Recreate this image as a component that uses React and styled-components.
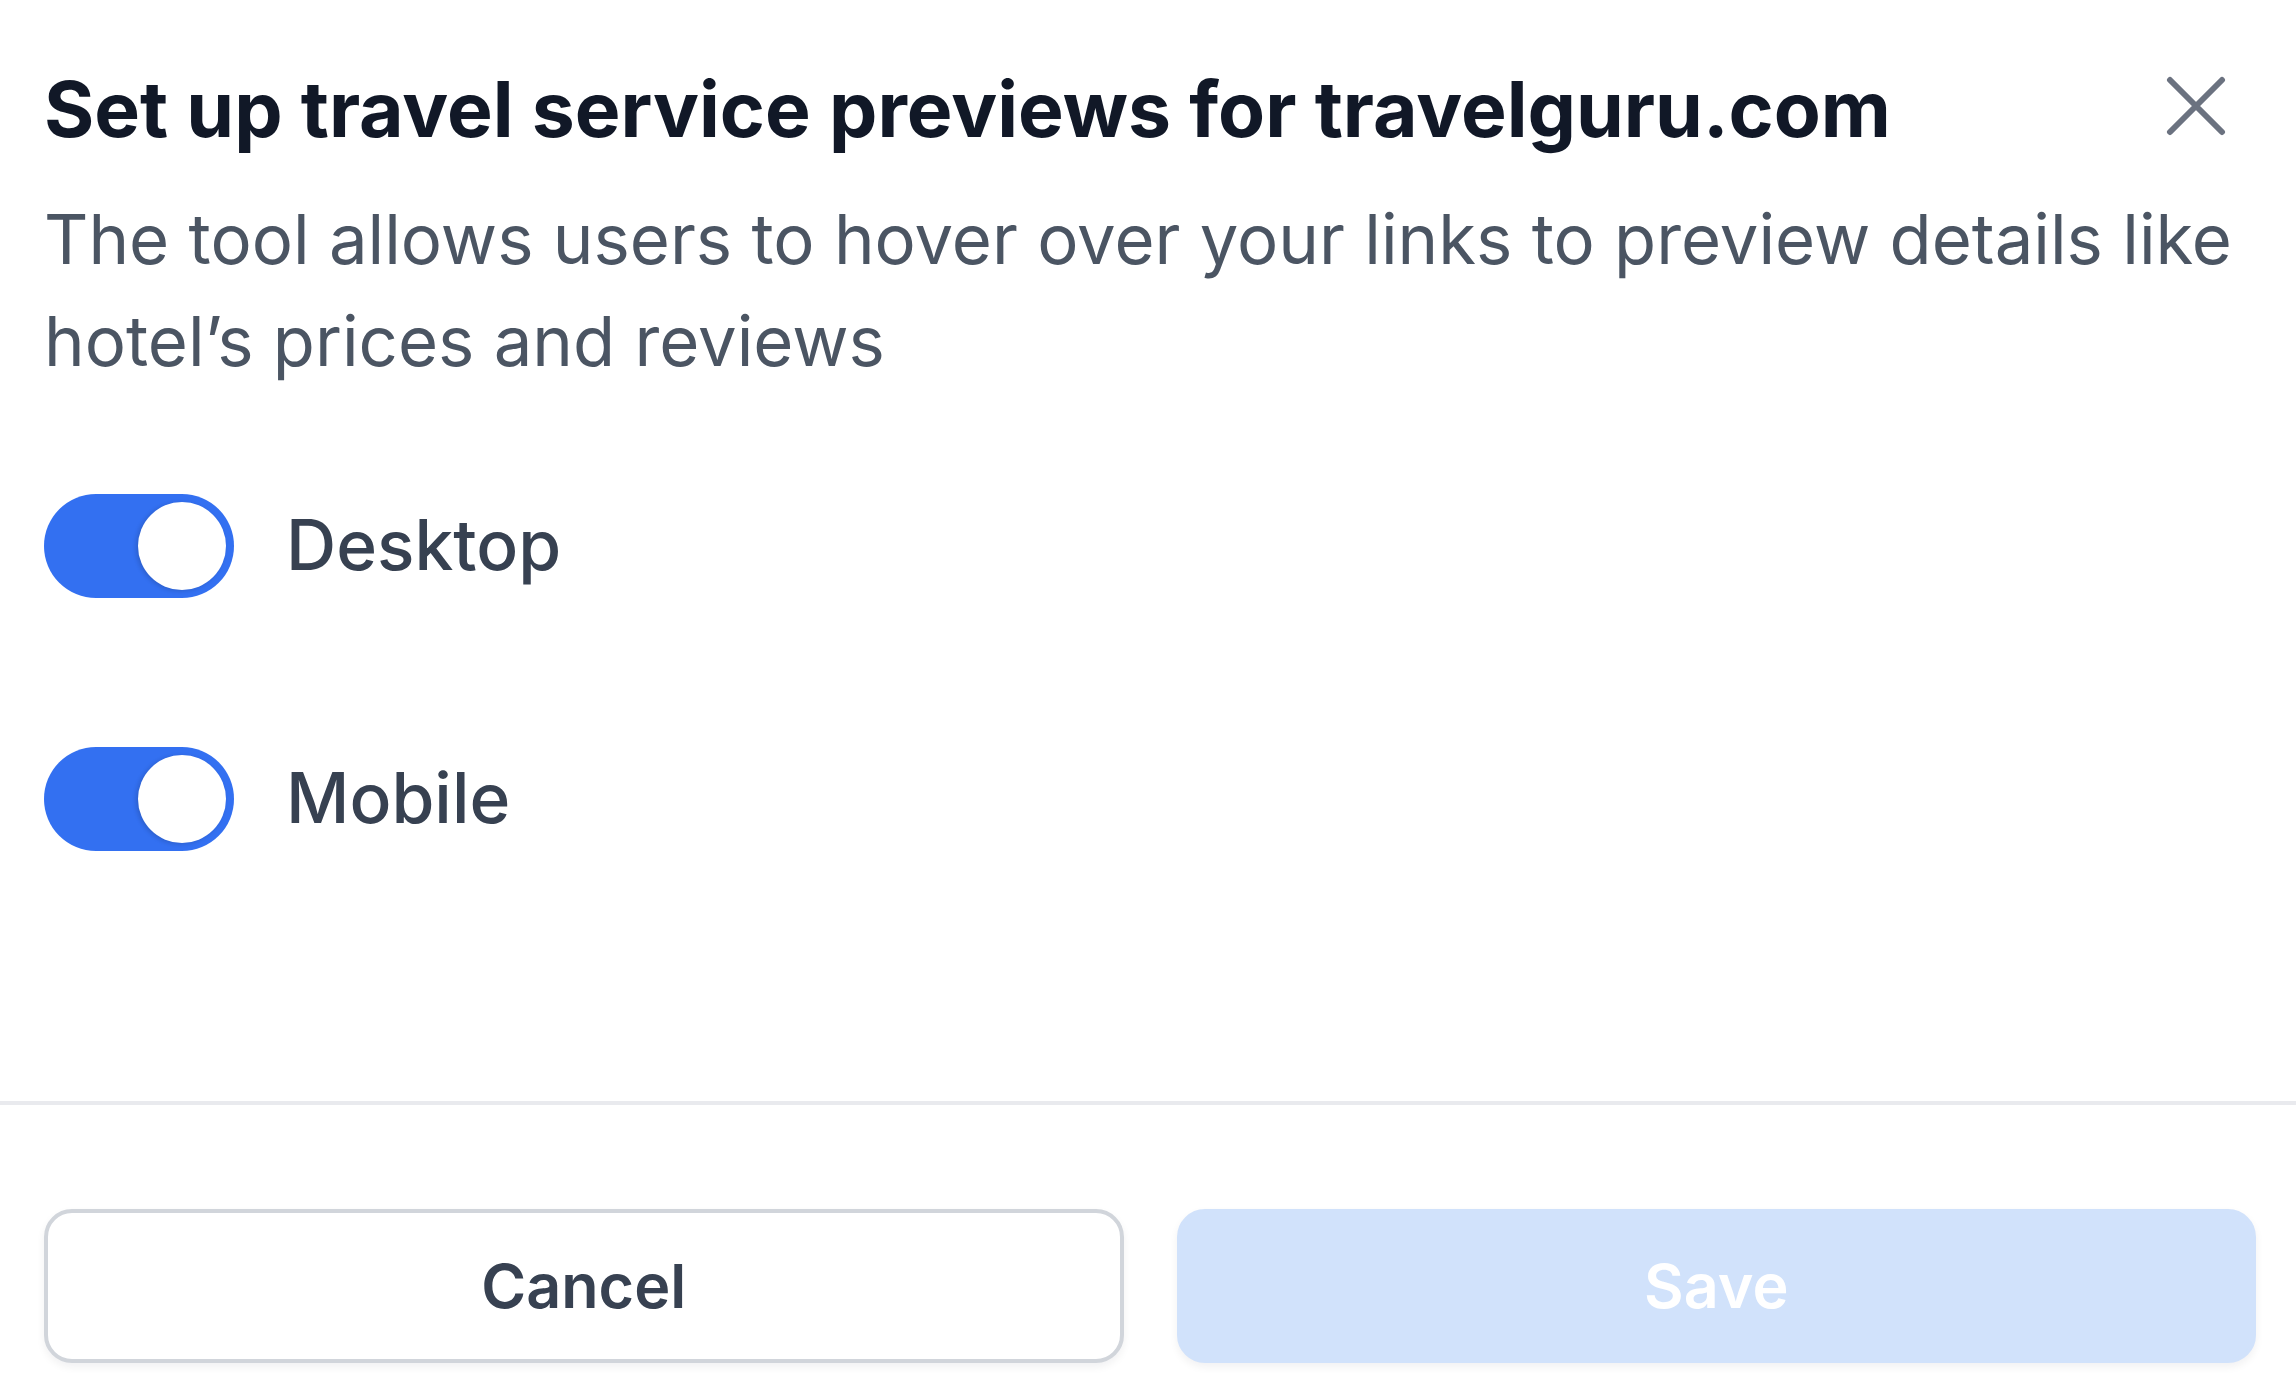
import React, { useState } from 'react'
import styled, { createGlobalStyle } from 'styled-components'

const GlobalStyle = createGlobalStyle`
  html, body {
    margin: 0;
    padding: 0;
    background: #ffffff;
  }
  body {
    font-family: Inter, "Noto Sans", "Liberation Sans", sans-serif;
    -webkit-font-smoothing: antialiased;
  }
  * {
    box-sizing: border-box;
  }
`

const Modal = styled.section`
  width: 100%;
  min-height: 100vh;
  background: #ffffff;
  display: flex;
  flex-direction: column;
`

const Body = styled.div`
  padding: 60px 40px 0 44px;
`

const Header = styled.div`
  display: flex;
  justify-content: space-between;
  align-items: flex-start;
`

const Title = styled.h2`
  margin: 0;
  font-size: 76.8px;
  line-height: 99px;
  font-weight: 700;
  color: #111827;
`

const CloseButton = styled.button`
  margin: 16px 30px 0 0;
  padding: 0;
  width: 60px;
  height: 60px;
  border: none;
  background: none;
  color: #6b7280;
  cursor: pointer;
  display: flex;

  svg {
    width: 100%;
    height: 100%;
  }
`

const Description = styled.p`
  margin: 29px 0 0;
  font-size: 68.8px;
  line-height: 102px;
  font-weight: 400;
  color: #4b5563;
`

const ToggleList = styled.div`
  display: flex;
  flex-direction: column;
  gap: 149px;
  margin-top: 102px;
  padding-bottom: 250px;
`

const ToggleRow = styled.label`
  display: flex;
  align-items: center;
  gap: 52px;
  cursor: pointer;
`

const Track = styled.span`
  width: 190px;
  height: 104px;
  border-radius: 52px;
  padding: 8px;
  display: flex;
  justify-content: ${({ $on }) => ($on ? 'flex-end' : 'flex-start')};
  align-items: center;
  background: ${({ $on }) => ($on ? '#3370f1' : '#e5e7eb')};
  flex-shrink: 0;
`

const Knob = styled.span`
  width: 88px;
  height: 88px;
  border-radius: 50%;
  background: #ffffff;
  box-shadow: -2px 1px 4px rgba(17, 24, 39, 0.18);
`

const ToggleLabel = styled.span`
  font-size: 69.5px;
  line-height: 1;
  font-weight: 500;
  color: #374151;
`

const Divider = styled.hr`
  margin: 0;
  border: none;
  height: 4px;
  background: #e9eaee;
`

const Footer = styled.div`
  display: grid;
  grid-template-columns: 1fr 1fr;
  gap: 53px;
  padding: 104px 40px 31px 44px;
`

const Button = styled.button`
  height: 154px;
  border-radius: 28px;
  font-family: inherit;
  font-size: 61px;
  font-weight: 600;
  cursor: ${({ $primary }) => ($primary ? 'not-allowed' : 'pointer')};
  border: 4px solid ${({ $primary }) => ($primary ? '#d1e2fb' : '#d1d5db')};
  background: ${({ $primary }) => ($primary ? '#d1e2fb' : '#ffffff')};
  color: ${({ $primary }) => ($primary ? '#ffffff' : '#374151')};
  box-shadow: 0 4px 8px rgba(17, 24, 39, 0.06);
`

function Toggle({ label, on, onChange }) {
  return (
    <ToggleRow onClick={onChange}>
      <Track $on={on}>
        <Knob />
      </Track>
      <ToggleLabel>{label}</ToggleLabel>
    </ToggleRow>
  )
}

export default function App() {
  const [desktop, setDesktop] = useState(true)
  const [mobile, setMobile] = useState(true)

  return (
    <>
      <GlobalStyle />
      <Modal>
        <Body>
          <Header>
            <Title>Set up travel service previews for travelguru.com</Title>
            <CloseButton aria-label="Close">
              <svg viewBox="0 0 60 60" fill="none" stroke="currentColor" strokeWidth="6" strokeLinecap="round">
                <path d="M4 4L56 56M56 4L4 56" />
              </svg>
            </CloseButton>
          </Header>
          <Description>
            The tool allows users to hover over your links to preview details like hotel’s prices and reviews
          </Description>
          <ToggleList>
            <Toggle label="Desktop" on={desktop} onChange={() => setDesktop(!desktop)} />
            <Toggle label="Mobile" on={mobile} onChange={() => setMobile(!mobile)} />
          </ToggleList>
        </Body>
        <Divider />
        <Footer>
          <Button>Cancel</Button>
          <Button $primary disabled>Save</Button>
        </Footer>
      </Modal>
    </>
  )
}
